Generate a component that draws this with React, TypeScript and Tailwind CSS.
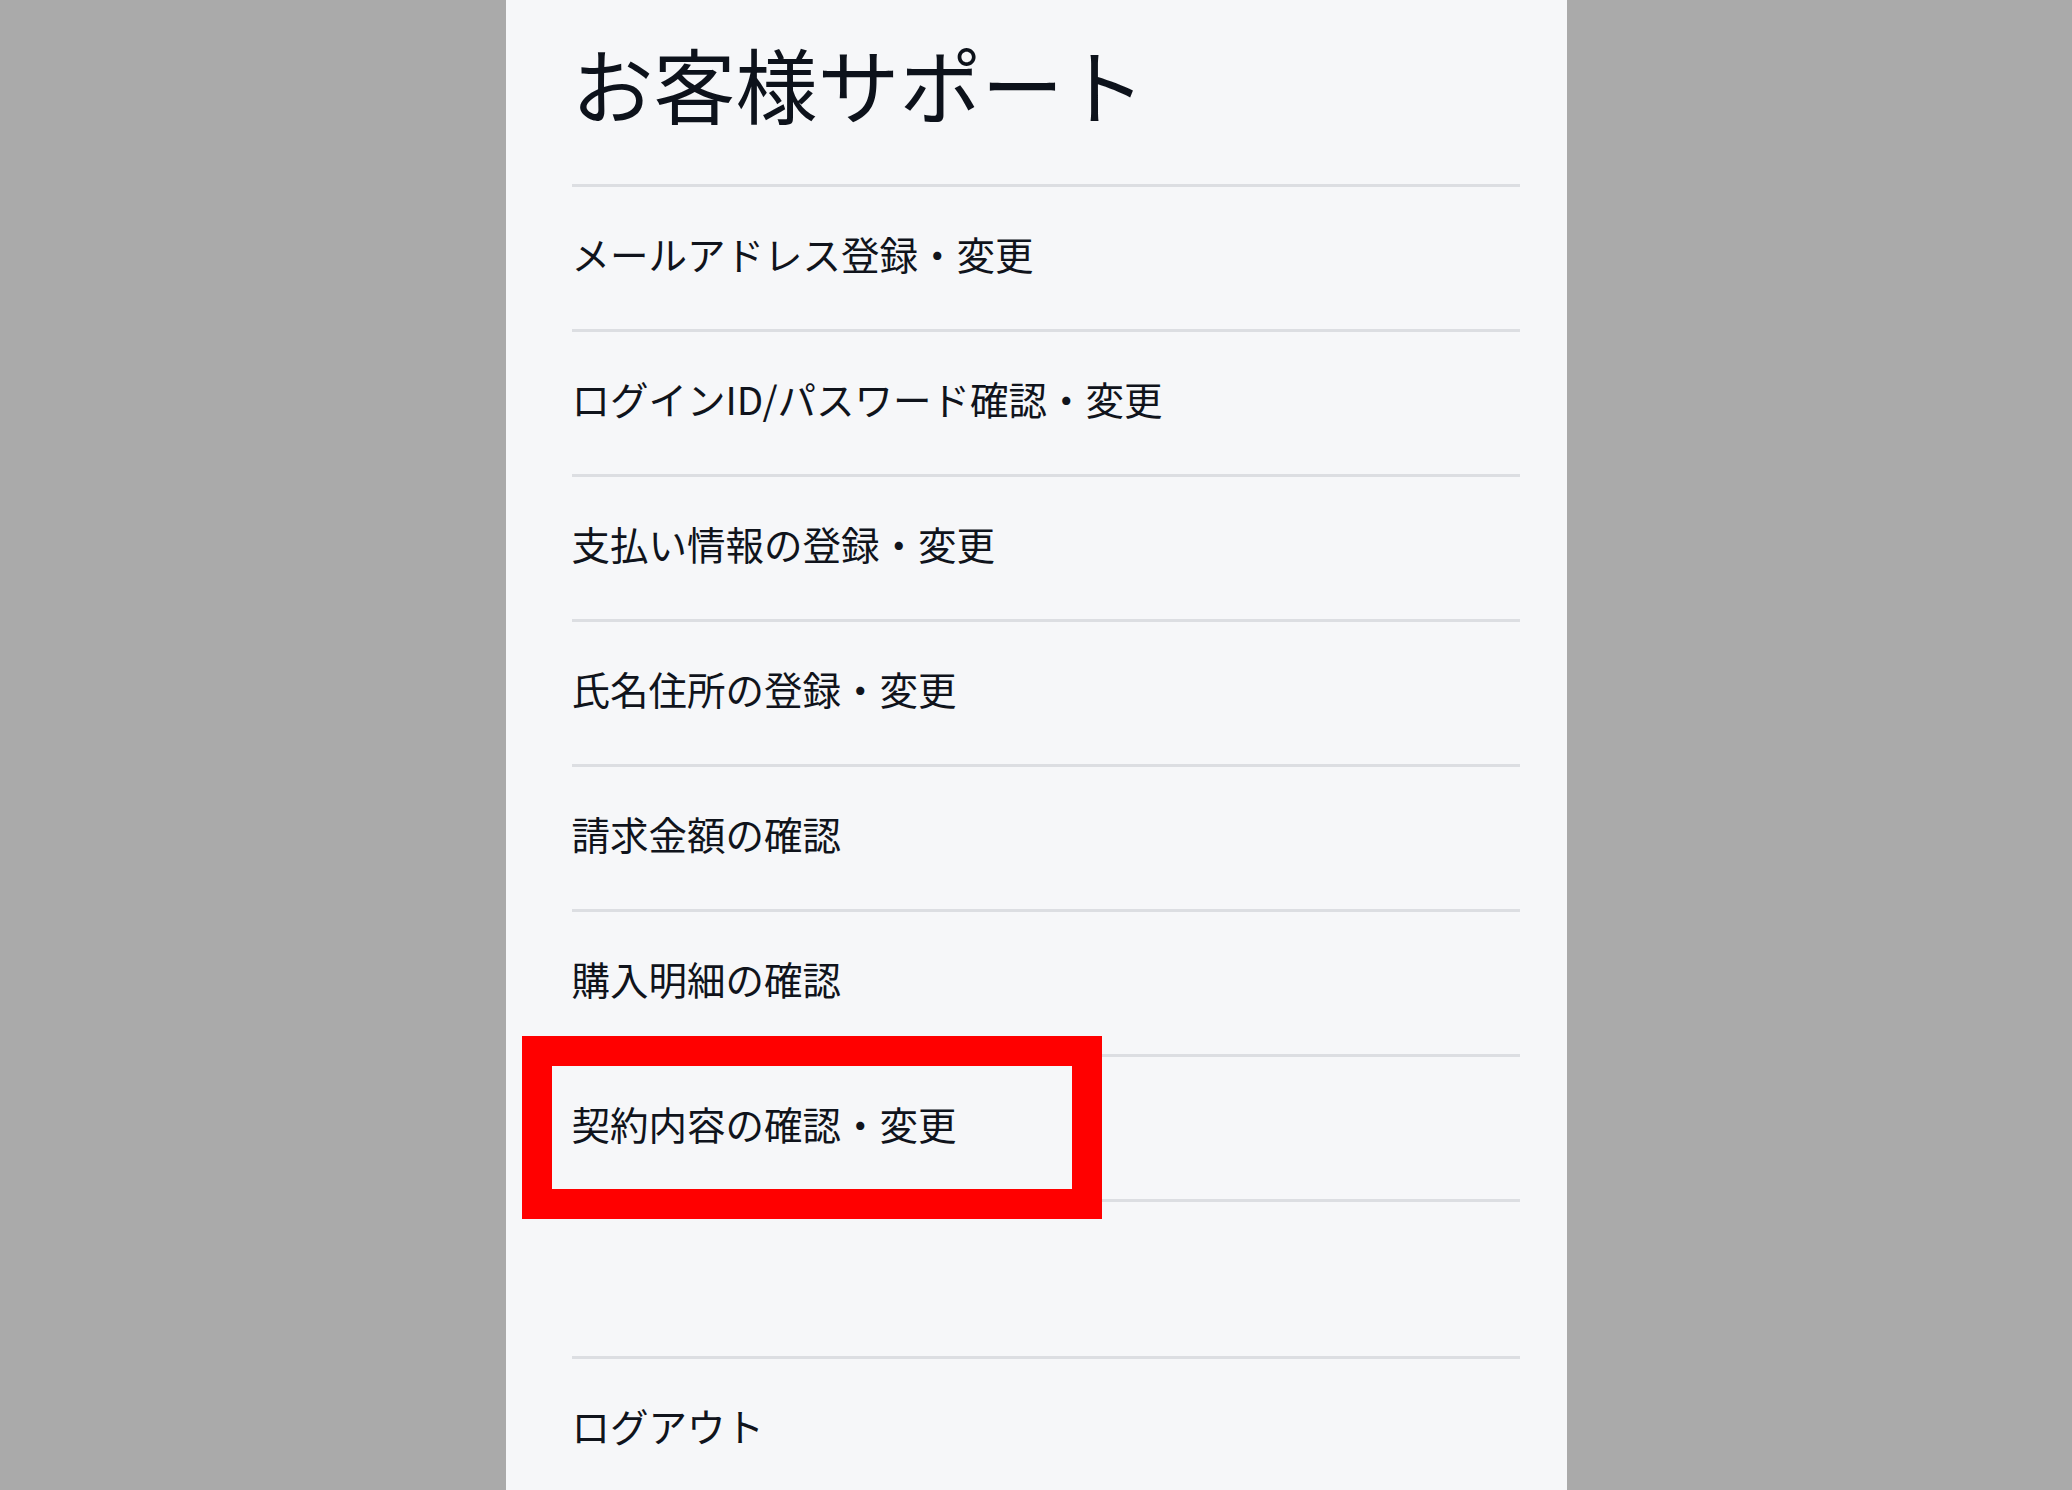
const items = [
  "メールアドレス登録・変更",
  "ログインID/パスワード確認・変更",
  "支払い情報の登録・変更",
  "氏名住所の登録・変更",
  "請求金額の確認",
  "購入明細の確認",
];

function Row({ label, highlight }: { label: string; highlight?: boolean }) {
  return (
    <div className="relative flex h-[145px] items-center border-t-[3px] border-[#dcdee2] pb-[10px]">
      <span className="text-[38.5px] font-normal leading-none text-[#10141c]">{label}</span>
      {highlight && (
        <div className="pointer-events-none absolute -left-[50px] -top-[21px] h-[183px] w-[580px] border-[30px] border-[#ff0000]" />
      )}
    </div>
  );
}

export default function App() {
  return (
    <div
      className="flex h-[1490px] justify-center overflow-hidden bg-[#aaaaaa]"
      style={{ fontFamily: '"Noto Sans CJK JP", "Noto Sans", sans-serif' }}
    >
      <div className="w-[1061px] bg-[#f6f7f9] pl-[66px] pr-[47px]">
        <div className="h-[184px] pt-[42px]">
          <h1 className="text-[82px] font-normal leading-none text-[#0d121b]">お客様サポート</h1>
        </div>
        {items.map((label) => (
          <Row key={label} label={label} />
        ))}
        <Row label="契約内容の確認・変更" highlight />
        <div className="h-[157px] border-t-[3px] border-[#dcdee2]" />
        <Row label="ログアウト" />
      </div>
    </div>
  );
}
